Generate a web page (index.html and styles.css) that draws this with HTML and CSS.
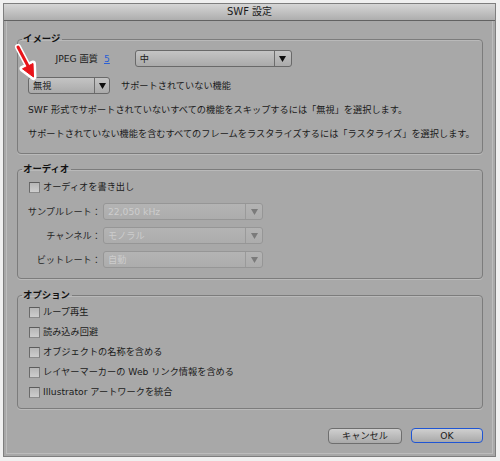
FILE: index.html
```html
<!DOCTYPE html>
<html lang="ja">
<head>
<meta charset="utf-8">
<title>SWF 設定</title>
<link rel="stylesheet" href="styles.css">
</head>
<body>
<div class="window">
  <div class="titlebar">SWF 設定</div>
  <div class="content">
    <fieldset class="group g-image">
      <legend>イメージ</legend>
      <div class="row r-jpeg">
        <span class="lbl-jpeg">JPEG 画質</span>
        <span class="link">5</span>
        <div class="select s-quality">
          <span class="val">中</span>
          <span class="arrow"><svg width="7" height="6" viewBox="0 0 7 6"><polygon points="0,0 7,0 3.5,6"/></svg></span>
        </div>
      </div>
      <div class="row r-ignore">
        <div class="select s-ignore">
          <span class="val">無視</span>
          <span class="arrow"><svg width="7" height="6" viewBox="0 0 7 6"><polygon points="0,0 7,0 3.5,6"/></svg></span>
        </div>
        <span class="lbl-unsupported">サポートされていない機能</span>
      </div>
      <p class="desc d1">SWF 形式でサポートされていないすべての機能をスキップするには「無視」を選択します。</p>
      <p class="desc d2">サポートされていない機能を含むすべてのフレームをラスタライズするには「ラスタライズ」を選択します。</p>
    </fieldset>

    <fieldset class="group g-audio">
      <legend>オーディオ</legend>
      <div class="row check-row first">
        <span class="checkbox"></span><span class="check-label">オーディオを書き出し</span>
      </div>
      <div class="row sel-row r-rate">
        <span class="lbl-col">サンプルレート：</span>
        <div class="select disabled s-audio">
          <span class="val">22,050 kHz</span>
          <span class="arrow"><svg width="7" height="6" viewBox="0 0 7 6"><polygon points="0,0 7,0 3.5,6"/></svg></span>
        </div>
      </div>
      <div class="row sel-row">
        <span class="lbl-col">チャンネル：</span>
        <div class="select disabled s-audio">
          <span class="val">モノラル</span>
          <span class="arrow"><svg width="7" height="6" viewBox="0 0 7 6"><polygon points="0,0 7,0 3.5,6"/></svg></span>
        </div>
      </div>
      <div class="row sel-row">
        <span class="lbl-col">ビットレート：</span>
        <div class="select disabled s-audio">
          <span class="val">自動</span>
          <span class="arrow"><svg width="7" height="6" viewBox="0 0 7 6"><polygon points="0,0 7,0 3.5,6"/></svg></span>
        </div>
      </div>
    </fieldset>

    <fieldset class="group g-options">
      <legend>オプション</legend>
      <div class="row check-row opt first">
        <span class="checkbox"></span><span class="check-label">ループ再生</span>
      </div>
      <div class="row check-row opt">
        <span class="checkbox"></span><span class="check-label">読み込み回避</span>
      </div>
      <div class="row check-row opt">
        <span class="checkbox"></span><span class="check-label">オブジェクトの名称を含める</span>
      </div>
      <div class="row check-row opt">
        <span class="checkbox"></span><span class="check-label">レイヤーマーカーの Web リンク情報を含める</span>
      </div>
      <div class="row check-row opt">
        <span class="checkbox"></span><span class="check-label">Illustrator アートワークを統合</span>
      </div>
    </fieldset>

    <div class="buttons">
      <div class="btn btn-cancel">キャンセル</div>
      <div class="btn btn-ok">OK</div>
    </div>
  </div>
</div>

<svg class="annot-arrow" width="50" height="90" viewBox="0 0 50 90">
  <g fill="none" stroke="#ffffff" stroke-width="6" stroke-linejoin="round" stroke-linecap="round">
    <line x1="18" y1="47" x2="28" y2="66"/>
    <polygon points="33.5,77 33,63.5 22.5,68.8"/>
  </g>
  <line x1="18" y1="47" x2="28" y2="66" stroke="#e8141a" stroke-width="3" stroke-linecap="round"/>
  <polygon points="33.5,77 33,63.5 22.5,68.8" fill="#e8141a" stroke="#e8141a" stroke-width="1" stroke-linejoin="round"/>
</svg>
</body>
</html>
```

FILE: styles.css
```css
html, body {
  margin: 0;
  padding: 0;
}

body {
  background: #f0f0f0;
  width: 500px;
  height: 461px;
  overflow: hidden;
  position: relative;
  font-family: "DejaVu Sans", "Noto Sans CJK JP", sans-serif;
  font-size: 9.2px;
  color: #1a1a1a;
}

.window {
  margin: 3px 0 0 3px;
  width: 491px;
  height: 452px;
  border: 1px solid #7e7e7e;
  background: #a8a8a8;
  box-shadow: inset 0 0 0 2px #a8a8a8, inset 0 0 0 3px #bcbcbc;
  display: flex;
  flex-direction: column;
}

.titlebar {
  height: 16px;
  line-height: 16px;
  border-bottom: 1px solid #626262;
  background: linear-gradient(#d6d6d6, #aeaeae);
  text-align: center;
  font-size: 10px;
  color: #1a1a1a;
  position: relative;
}

.content {
  padding: 12px 12px 0 13px;
  display: flex;
  flex-direction: column;
}

.group {
  margin: 0;
  padding: 0;
  border: 1px solid #7c7c7c;
  border-radius: 4px;
  box-shadow: 0 1px 0 #bababa, inset 0 1px 0 #b9b9b9;
  min-inline-size: 0;
  display: flex;
  flex-direction: column;
}

.group legend {
  margin-left: 4px;
  padding: 0 2px 0 1px;
  font-weight: bold;
  line-height: 12px;
  height: 12px;
  font-size: 9.4px;
  color: #111;
}

.row {
  display: flex;
  align-items: center;
}

/* Image group */
.g-image {
  padding-bottom: 13px;
}

.r-jpeg {
  margin-top: 5px;
  height: 17px;
}

.lbl-jpeg {
  width: 80px;
  text-align: right;
  line-height: 12px;
}

.link {
  margin-left: 6px;
  color: #2a5fd6;
  text-decoration: underline;
  line-height: 12px;
}

.select {
  height: 15px;
  border: 1px solid #696969;
  border-radius: 3px;
  background: linear-gradient(#c4c4c4, #aaaaaa);
  display: flex;
  align-items: stretch;
  box-sizing: content-box;
}

.select .val {
  flex: 1;
  padding-left: 4px;
  line-height: 15px;
  white-space: nowrap;
  overflow: hidden;
}

.select .arrow {
  width: 16px;
  border-left: 1px solid #6c6c6c;
  display: flex;
  align-items: center;
  justify-content: center;
}

.select .arrow svg {
  fill: #0d0d0d;
}

.s-quality {
  margin-left: 25px;
  width: 155px;
}

.r-ignore {
  margin-top: 10px;
  height: 17px;
  padding-left: 10px;
}

.s-ignore {
  width: 80px;
}

.s-ignore .arrow {
  width: 14px;
}

.lbl-unsupported {
  margin-left: 11px;
  line-height: 12px;
}

.desc {
  margin: 0;
  padding-left: 10px;
  line-height: 12px;
  white-space: nowrap;
}

.d1 {
  margin-top: 10px;
}

.d2 {
  margin-top: 12px;
}

/* Audio group */
.g-audio {
  margin-top: 9px;
  padding-bottom: 10px;
}

.check-row {
  height: 12px;
  padding-left: 11px;
}

.check-row.first {
  margin-top: 6px;
}

.checkbox {
  width: 9px;
  height: 9px;
  border: 1px solid;
  border-color: #5c5c5c #7e7e7e #8c8c8c #6a6a6a;
  background: linear-gradient(#b6b6b6, #cdcdcd);
  flex: none;
}

.check-label {
  margin-left: 3px;
  line-height: 12px;
  white-space: nowrap;
}

.sel-row {
  margin-top: 7px;
  height: 17px;
}

.sel-row.r-rate {
  margin-top: 10px;
}

.lbl-col {
  width: 83px;
  text-align: right;
  line-height: 12px;
  color: #262626;
  white-space: nowrap;
}

.s-audio {
  margin-left: 2px;
  width: 158px;
}

.select.disabled {
  border-color: #969696;
  background: linear-gradient(#b4b4b4, #acacac);
  color: #cdcdcd;
}

.select.disabled .arrow {
  border-left-color: #9a9a9a;
}

.select.disabled .arrow svg {
  fill: #7b7b7b;
}

/* Options group */
.g-options {
  margin-top: 10px;
  padding-bottom: 10px;
}

.opt {
  margin-top: 8px;
}

.opt.first {
  margin-top: 5px;
}

/* Buttons */
.buttons {
  margin-top: 19px;
  display: flex;
  justify-content: flex-end;
  gap: 9px;
}

.btn {
  height: 14px;
  line-height: 14px;
  text-align: center;
  border-radius: 4px;
  color: #1a1a1a;
  background: linear-gradient(#cfcfcf, #a9a9a9);
}

.btn-cancel {
  width: 72px;
  border: 1px solid #6e6e6e;
}

.btn-ok {
  width: 70px;
  border: 1.5px solid #1f55d4;
  height: 13px;
  line-height: 13px;
}

.annot-arrow {
  position: absolute;
  left: 0;
  top: 0;
}
```
